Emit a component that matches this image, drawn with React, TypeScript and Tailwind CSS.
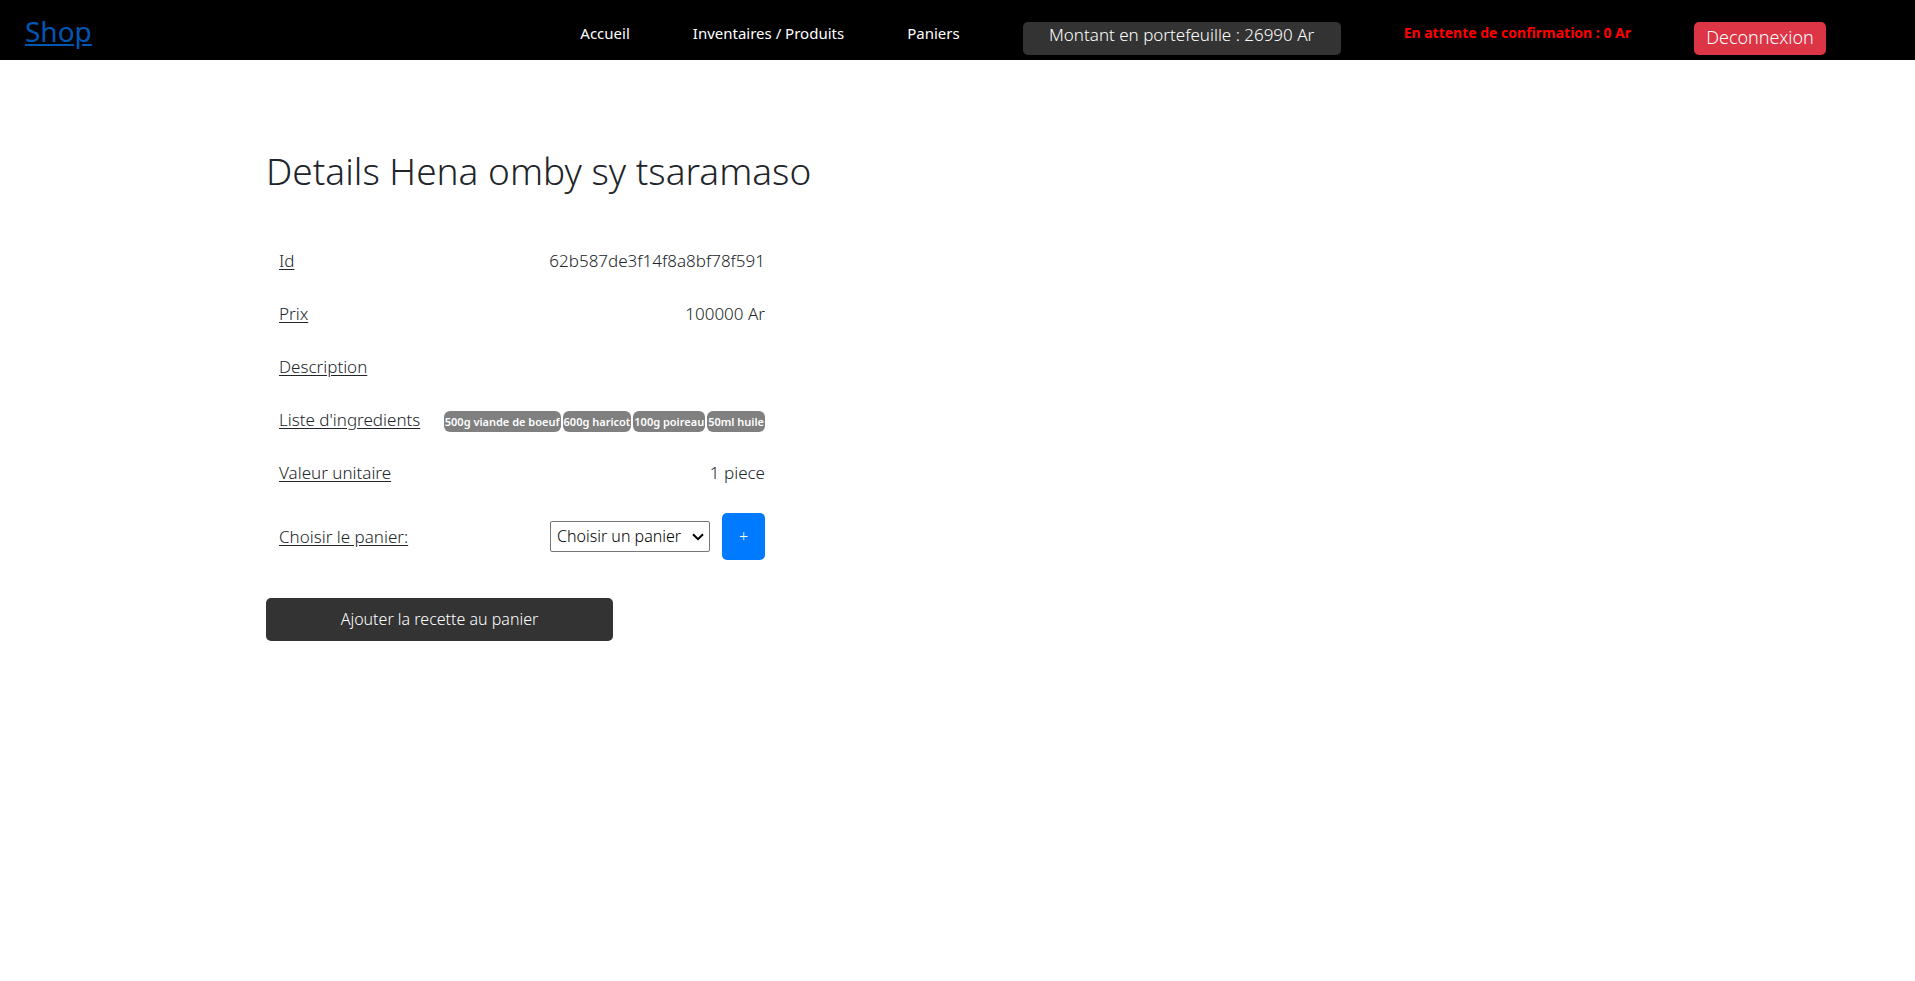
import React from "react";

const ingredients = ["500g viande de boeuf", "600g haricot", "100g poireau", "50ml huile"];

function Header() {
  return (
    <header className="flex h-[60px] items-start justify-between bg-black pl-[25px] pr-[89px] text-white">
      <a href="#" className="mt-[11px] text-[28px] leading-10 text-[#0056b3] underline">
        Shop
      </a>
      <nav className="flex items-start gap-[63px] pt-[22px] text-[15px] leading-[22px]">
        <a href="#">Accueil</a>
        <a href="#">Inventaires / Produits</a>
        <a href="#">Paniers</a>
        <span className="h-[33px] w-[318px] rounded-[5px] bg-[#333333] text-center text-[17px] font-[350] leading-[26px]">
          Montant en portefeuille : 26990 Ar
        </span>
        <span className="whitespace-nowrap text-sm font-bold leading-[22px] text-[#ff0000]">
          En attente de confirmation : 0 Ar
        </span>
        <button type="button" className="h-[33px] w-[132px] rounded-[5px] bg-[#dc3545] pb-[3px] text-lg leading-7 font-[350]">
          Deconnexion
        </button>
      </nav>
    </header>
  );
}

function Row({ label, children }: { label: React.ReactNode; children?: React.ReactNode }) {
  return (
    <tr className="h-[53px]">
      <th scope="row" className="whitespace-nowrap pl-[13px] text-left font-light underline underline-offset-2">
        {label}
      </th>
      <td className="px-3 text-right">{children}</td>
    </tr>
  );
}

export default function App() {
  return (
    <div className="min-h-screen bg-white font-['Noto_Sans',sans-serif] text-[#212529]">
      <Header />
      <main className="ml-[266px] pt-[83px] font-light">
        <h1 className="text-[37px] leading-[56px]">Details Hena omby sy tsaramaso</h1>
        <table className="mt-[35px] w-[511px] text-[17px] leading-7">
          <tbody>
            <Row label="Id">62b587de3f14f8a8bf78f591</Row>
            <Row label="Prix">100000 Ar</Row>
            <Row label="Description" />
            <Row label="Liste d'ingredients">
              <div className="flex justify-end gap-[2px] pt-1">
                {ingredients.map((item) => (
                  <span
                    key={item}
                    className="whitespace-nowrap rounded-md bg-[#808080] px-px text-[11px] font-semibold leading-[21px] text-white"
                  >
                    {item}
                  </span>
                ))}
              </div>
            </Row>
            <Row label="Valeur unitaire">1 piece</Row>
            <tr className="h-[75px]">
              <th scope="row" className="pl-[13px] text-left font-light underline underline-offset-2">
                <label htmlFor="panier">Choisir le panier:</label>
              </th>
              <td className="px-3">
                <div className="flex items-center justify-end gap-3">
                  <div className="relative">
                    <select
                      id="panier"
                      className="block h-[31px] w-40 appearance-none rounded-xs border border-[#767676] bg-white pb-[2px] pl-[6px] text-base text-black"
                    >
                      <option>Choisir un panier</option>
                    </select>
                    <svg
                      className="pointer-events-none absolute right-[6px] top-3 h-2 w-3"
                      viewBox="0 0 12 8"
                      fill="none"
                      stroke="black"
                      strokeWidth="2"
                      aria-hidden="true"
                    >
                      <path d="M1 1.2 6 6.2 11 1.2" />
                    </svg>
                  </div>
                  <button type="button" className="h-[47px] w-[43px] rounded-[5px] bg-[#007bff] pb-[2px] text-base text-white">
                    +
                  </button>
                </div>
              </td>
            </tr>
          </tbody>
        </table>
        <button type="button" className="mt-6 h-[43px] w-[347px] rounded-[5px] bg-[#333333] pb-[2px] text-base font-[350] text-white">
          Ajouter la recette au panier
        </button>
      </main>
    </div>
  );
}
